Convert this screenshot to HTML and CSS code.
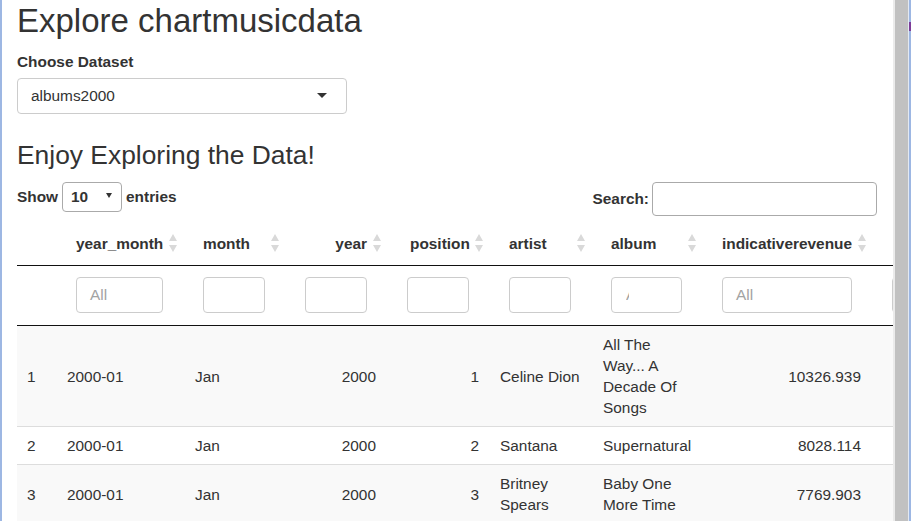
FILE: index.html
```html
<!DOCTYPE html>
<html lang="en">
<head>
<meta charset="utf-8">
<title>Explore chartmusicdata</title>
<link rel="stylesheet" href="styles.css">
</head>
<body>
<div class="frame">
  <div class="edge-left"></div>
  <div class="main">
    <div class="container">
      <h2 class="title">Explore chartmusicdata</h2>
      <label class="ctrl-label">Choose Dataset</label>
      <div class="select-box"><span>albums2000</span><span class="caret"></span></div>
      <h3 class="subtitle">Enjoy Exploring the Data!</h3>
      <div class="dt-controls">
        <div class="length"><span>Show</span><div class="len-select"><span>10</span><span class="tri"></span></div><span>entries</span></div>
        <div class="search"><span>Search:</span><div class="search-input"></div></div>
      </div>
      <div class="dt-tables">
        <table class="head-table">
          <colgroup>
            <col class="c-rn-h"><col class="c-ym-h"><col class="c-mo-h"><col class="c-yr-h"><col class="c-po-h"><col class="c-ar-h"><col class="c-al-h"><col class="c-ir-h"><col class="c-ex-h">
          </colgroup>
          <thead>
            <tr class="hdr">
              <th></th>
              <th>year_month<svg class="sort" viewBox="0 0 8 18"><path d="M0 7L4 0L8 7Z M0 11L4 18L8 11Z"/></svg></th>
              <th>month<svg class="sort" viewBox="0 0 8 18"><path d="M0 7L4 0L8 7Z M0 11L4 18L8 11Z"/></svg></th>
              <th class="num">year<svg class="sort" viewBox="0 0 8 18"><path d="M0 7L4 0L8 7Z M0 11L4 18L8 11Z"/></svg></th>
              <th class="pos">position<svg class="sort" viewBox="0 0 8 18"><path d="M0 7L4 0L8 7Z M0 11L4 18L8 11Z"/></svg></th>
              <th>artist<svg class="sort" viewBox="0 0 8 18"><path d="M0 7L4 0L8 7Z M0 11L4 18L8 11Z"/></svg></th>
              <th>album<svg class="sort" viewBox="0 0 8 18"><path d="M0 7L4 0L8 7Z M0 11L4 18L8 11Z"/></svg></th>
              <th>indicativerevenue<svg class="sort" viewBox="0 0 8 18"><path d="M0 7L4 0L8 7Z M0 11L4 18L8 11Z"/></svg></th>
              <th class="num"></th>
            </tr>
            <tr class="filter">
              <td></td>
              <td><div class="finput">All</div></td>
              <td><div class="finput"></div></td>
              <td><div class="finput"></div></td>
              <td><div class="finput"></div></td>
              <td><div class="finput"></div></td>
              <td><div class="finput"><span class="clip">All</span></div></td>
              <td><div class="finput">All</div></td>
              <td><div class="finput"></div></td>
            </tr>
          </thead>
        </table>
        <table class="body-table">
          <colgroup>
            <col class="c-rn"><col class="c-ym"><col class="c-mo"><col class="c-yr"><col class="c-po"><col class="c-ar"><col class="c-al"><col class="c-ir"><col class="c-ex">
          </colgroup>
          <tbody>
            <tr>
              <td>1</td><td>2000-01</td><td>Jan</td><td class="num">2000</td><td class="num pos">1</td><td>Celine Dion</td><td>All The Way... A Decade Of Songs</td><td class="num">10326.939</td><td></td>
            </tr>
            <tr>
              <td>2</td><td>2000-01</td><td>Jan</td><td class="num">2000</td><td class="num pos">2</td><td>Santana</td><td>Supernatural</td><td class="num">8028.114</td><td></td>
            </tr>
            <tr>
              <td>3</td><td>2000-01</td><td>Jan</td><td class="num">2000</td><td class="num pos">3</td><td>Britney Spears</td><td>Baby One More Time</td><td class="num">7769.903</td><td></td>
            </tr>
          </tbody>
        </table>
      </div>
    </div>
  </div>
  <div class="scrollbar">
    <div class="sb-gap"></div>
    <div class="sb-thumb"></div>
    <div class="sb-line"></div>
    <div class="edge-right"></div>
  </div>
</div>
</body>
</html>
```
FILE: styles.css
```css
html, body {
  margin: 0;
  padding: 0;
}
body {
  font-family: "Liberation Sans", Arial, sans-serif;
  font-size: 15.4px;
  line-height: 22px;
  color: #333;
  background: #fff;
  overflow: hidden;
}
.frame {
  display: flex;
  height: 521px;
}
.edge-left {
  flex: none;
  width: 2px;
  background: #9db7e3;
}
.main {
  flex: 1;
  min-width: 0;
  overflow: hidden;
}
.container {
  width: 860px;
  padding: 0 16px 0 15px;
}
.title {
  font-size: 33px;
  line-height: 36px;
  font-weight: normal;
  margin: 3px 0 0;
}
.ctrl-label {
  display: block;
  font-weight: bold;
  margin-top: 12px;
}
.select-box {
  margin-top: 5px;
  width: 330px;
  height: 36px;
  box-sizing: border-box;
  border: 1px solid #ccc;
  border-radius: 4px;
  display: flex;
  align-items: center;
  justify-content: space-between;
  padding: 0 19px 0 13px;
  color: #333;
}
.caret {
  width: 0;
  height: 0;
  border-top: 5px solid #333;
  border-left: 5px solid transparent;
  border-right: 5px solid transparent;
  margin-top: -2px;
}
.subtitle {
  font-size: 26.4px;
  line-height: 29px;
  font-weight: normal;
  margin: 27px 0 0;
}
.dt-controls {
  display: flex;
  justify-content: space-between;
  align-items: flex-start;
  margin-top: 12px;
  height: 34px;
}
.length {
  display: flex;
  align-items: center;
  gap: 4px;
  height: 30px;
  font-weight: bold;
}
.len-select {
  width: 60px;
  height: 30px;
  box-sizing: border-box;
  border: 1px solid #aaa;
  border-radius: 4px;
  display: flex;
  align-items: center;
  justify-content: space-between;
  padding: 0 9px 0 8px;
}
.tri {
  width: 0;
  height: 0;
  border-top: 5px solid #333;
  border-left: 3px solid transparent;
  border-right: 3px solid transparent;
  margin-top: -3px;
}
.search {
  display: flex;
  align-items: center;
  height: 34px;
  font-weight: bold;
}
.search-input {
  width: 225px;
  height: 34px;
  box-sizing: border-box;
  border: 1px solid #aaa;
  border-radius: 4px;
  margin-left: 3px;
}
.dt-tables {
  margin-top: 7px;
}
table {
  border-collapse: separate;
  border-spacing: 0;
  table-layout: fixed;
}
.head-table { width: 1015px; }
.c-rn-h { width: 49px; }
.c-ym-h { width: 127px; }
.c-mo-h { width: 102px; }
.c-yr-h { width: 102px; }
.c-po-h { width: 102px; }
.c-ar-h { width: 102px; }
.c-al-h { width: 111px; }
.c-ir-h { width: 170px; }
.c-ex-h { width: 150px; }
.hdr th {
  position: relative;
  text-align: left;
  font-weight: bold;
  white-space: nowrap;
  padding: 10px 30px 10px 10px;
  border-bottom: 1px solid #111;
  line-height: 22px;
}
.hdr th.num { text-align: right; }
.hdr th.pos { padding-left: 13px; }
.sort {
  position: absolute;
  right: 16px;
  top: 11px;
  width: 8px;
  height: 18px;
  fill: #d9d9d9;
}
.filter td {
  padding: 11px 30px 12px 10px;
  border-bottom: 1px solid #111;
}
.finput {
  height: 36px;
  box-sizing: border-box;
  border: 1px solid #ccc;
  border-radius: 4px;
  padding-left: 13px;
  display: flex;
  align-items: center;
  overflow: hidden;
  color: #a3a3a3;
  white-space: nowrap;
}
.clip {
  display: inline-block;
  width: 3px;
  overflow: hidden;
  margin-left: 1px;
}
.body-table { width: 1004px; }
.c-rn { width: 40px; }
.c-ym { width: 128px; }
.c-mo { width: 101px; }
.c-yr { width: 100px; }
.c-po { width: 104px; }
.c-ar { width: 103px; }
.c-al { width: 109px; }
.c-ir { width: 169px; }
.c-ex { width: 150px; }
.body-table td {
  padding: 8px 10px;
  line-height: 21px;
  border-bottom: 1px solid #ddd;
  vertical-align: middle;
}
.body-table td.num { text-align: right; }
.body-table td.pos { padding-right: 11px; }
.body-table tr:nth-child(odd) td { background: #f9f9f9; }
.scrollbar {
  flex: none;
  width: 18px;
  display: flex;
}
.sb-gap { width: 2px; background: #ebebeb; }
.sb-thumb { width: 13px; background: #c1c1c1; }
.sb-line { width: 1px; background: #e3e9f2; }
.edge-right {
  width: 2px;
  background: linear-gradient(to bottom, #9db7e3 0, #9db7e3 22px, #7d3c98 22px, #7d3c98 31px, #9db7e3 31px);
}
```
